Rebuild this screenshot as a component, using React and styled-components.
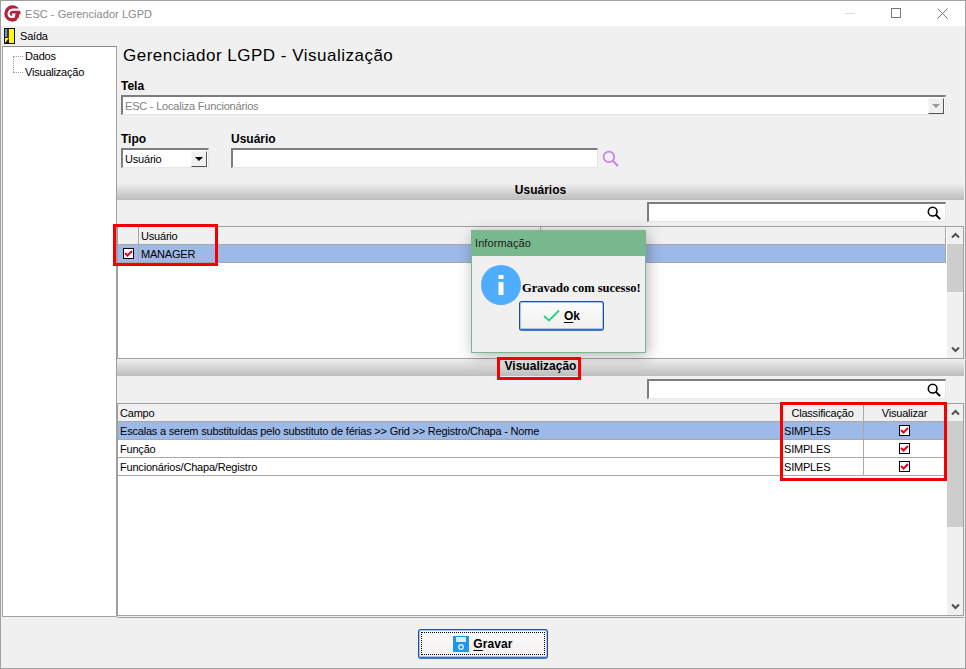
import React from 'react';
import styled, { createGlobalStyle } from 'styled-components';

const GlobalStyle = createGlobalStyle`
  html, body { margin: 0; padding: 0; background: #f0f0f0; }
  body { font-family: "Liberation Sans", Arial, sans-serif; font-size: 11px; color: #000; }
  * { box-sizing: border-box; }
`;

const camposRows = [
  { campo: 'Escalas a serem substituídas pelo substituto de férias >> Grid >> Registro/Chapa - Nome', selected: true },
  { campo: 'Função' },
  { campo: 'Funcionários/Chapa/Registro' },
];

const Window = styled.div`
  position: relative;
  width: 966px;
  height: 669px;
  background: #f0f0f0;
  border: 1px solid #a0a0a0;
  display: flex;
  flex-direction: column;
  overflow: hidden;
`;

const TitleBar = styled.div`
  height: 25px;
  background: #fff;
  display: flex;
  align-items: center;
  padding-left: 3px;
  flex: none;
`;

const TitleText = styled.span`
  margin-left: 4px;
  font-size: 11px;
  color: #8a8a8a;
  letter-spacing: 0.05px;
`;

const WindowButtons = styled.div`
  margin-left: auto;
  display: flex;
  align-items: center;
  gap: 35px;
  padding-right: 17px;
`;

const MenuBar = styled.div`
  height: 20px;
  display: flex;
  align-items: center;
  padding-left: 3px;
  gap: 5px;
  font-size: 11px;
  letter-spacing: -0.2px;
  flex: none;
`;

const Body = styled.div`
  flex: none;
  height: 571px;
  display: flex;
  padding-left: 1px;
`;

const Sidebar = styled.div`
  width: 115px;
  flex: none;
  background: #fff;
  border: 1px solid #a0a0a0;
  border-top-color: #8c8c8c;
  padding: 1px 0 0 10px;
`;

const TreeItem = styled.div`
  position: relative;
  height: 16px;
  display: flex;
  align-items: center;
  font-size: 11px;
  letter-spacing: -0.2px;
  &::before {
    content: '';
    width: 10px;
    margin-right: 2px;
    border-top: 1px dotted #a0a0a0;
  }
  &:not(:last-child)::after {
    content: '';
    position: absolute;
    left: 0;
    top: 8px;
    height: 16px;
    border-left: 1px dotted #a0a0a0;
  }
`;

const Main = styled.div`
  flex: 1;
  min-width: 0;
  display: flex;
  flex-direction: column;
`;

const FormArea = styled.div`
  height: 137px;
  padding: 0 18px 0 4px;
  flex: none;
`;

const Heading = styled.h1`
  margin: 0;
  padding: 0 0 0 2px;
  height: 33px;
  font-size: 17px;
  line-height: 20px;
  font-weight: 400;
  letter-spacing: 0.5px;
`;

const FieldLabel = styled.div`
  font-size: 12px;
  font-weight: 700;
  height: 14px;
  line-height: 14px;
`;

const Sunken = styled.div`
  height: 20px;
  background: #fff;
  border-top: 2px solid #7d7d7d;
  border-left: 2px solid #7d7d7d;
  border-right: 1px solid #e6e6e6;
  border-bottom: 1px solid #e6e6e6;
  display: flex;
  align-items: center;
  padding-left: 2px;
  font-size: 11px;
  letter-spacing: -0.2px;
  width: ${(p) => p.$width || 'auto'};
  flex: none;
`;

const TelaCombo = styled(Sunken)`
  margin-top: 2px;
`;

const ComboValue = styled.span`
  flex: 1;
  white-space: nowrap;
  color: ${(p) => (p.$disabled ? '#808080' : '#000')};
`;

const ComboArrow = styled.div`
  width: 16px;
  height: 16px;
  margin-right: 1px;
  background: #f0f0f0;
  border: 1px solid;
  border-color: #f8f8f8 #555 #555 #f8f8f8;
  display: flex;
  align-items: center;
  justify-content: center;
  &::after {
    content: '';
    border-left: 4px solid transparent;
    border-right: 4px solid transparent;
    border-top: 4px solid ${(p) => (p.$disabled ? '#999' : '#000')};
  }
`;

const FieldRow = styled.div`
  display: flex;
  align-items: flex-end;
  gap: 22px;
  margin-top: 17px;
`;

const Field = styled.div`
  display: flex;
  flex-direction: column;
  gap: 2px;
`;

const UserInput = styled.div`
  display: flex;
  align-items: center;
  gap: 4px;
`;

const SectionBar = styled.div`
  height: 17px;
  flex: none;
  margin-right: 1px;
  background: linear-gradient(#f0f0f0, #bcbcbc);
  text-align: center;
  font-size: 12px;
  font-weight: 700;
  line-height: 15px;
`;

const FilterRow = styled.div`
  height: ${(p) => p.$height}px;
  flex: none;
  display: flex;
  justify-content: flex-end;
  padding: ${(p) => p.$top}px 19px 0 0;
`;

const FilterBox = styled(Sunken)`
  width: 299px;
  justify-content: flex-end;
  padding-right: 4px;
`;

const GridBox = styled.div`
  flex: none;
  height: ${(p) => p.$height}px;
  margin-right: 1px;
  border: 1px solid #a0a0a0;
  background: #fff;
  display: flex;
`;

const GridBody = styled.div`
  flex: 1;
  min-width: 0;
  border-right: 1px solid #fff;
`;

const Row = styled.div`
  display: grid;
  grid-template-columns: ${(p) => p.$cols};
  height: 18px;
  background: ${(p) => (p.$header ? '#f0f0f0' : p.$selected ? '#9db9e8' : '#fff')};
  border-bottom: 1px solid #a8a8a8;
  border-right: 1px solid #a8a8a8;
`;

const Cell = styled.div`
  display: flex;
  align-items: center;
  justify-content: ${(p) => (p.$center ? 'center' : 'flex-start')};
  padding-left: ${(p) => (p.$center ? 0 : 2)}px;
  font-size: 11px;
  letter-spacing: -0.2px;
  white-space: nowrap;
  overflow: hidden;
  border-right: ${(p) => (p.$sep ? '1px solid #a8a8a8' : 'none')};
`;

const CheckBox = styled.span`
  width: 11px;
  height: 11px;
  background: #fff;
  border: 1px solid #000;
  display: inline-flex;
  align-items: center;
  justify-content: center;
`;

const ScrollBar = styled.div`
  width: 16px;
  flex: none;
  background: #f0f0f0;
  display: flex;
  flex-direction: column;
`;

const ScrollButton = styled.div`
  height: 17px;
  flex: none;
  display: flex;
  align-items: center;
  justify-content: center;
  background: #f0f0f0;
`;

const ScrollTrack = styled.div`
  flex: 1;
`;

const ScrollThumb = styled.div`
  height: ${(p) => p.$height}px;
  background: #cdcdcd;
`;

const Footer = styled.div`
  flex: 1;
  border-top: 1px solid #a0a0a0;
  margin-left: 116px;
  margin-right: 1px;
  display: flex;
  align-items: flex-start;
  padding: 11px 0 0 301px;
`;

const WinButton = styled.button`
  width: ${(p) => p.$width}px;
  height: ${(p) => p.$height}px;
  border: 1px solid #1f4f94;
  border-bottom: 2px solid #3f6fc8;
  border-radius: 3px;
  background: linear-gradient(#fdfdfd, #f2efec);
  padding: 0;
  display: flex;
  align-items: center;
  justify-content: center;
  gap: 4px;
  font-family: "Liberation Sans", Arial, sans-serif;
  font-size: 12px;
  font-weight: 700;
  letter-spacing: 0.1px;
  color: #000;
  box-shadow: inset 0 0 0 1px #a9c4f0;
  position: relative;
  ${(p) =>
    p.$focused &&
    `&::after {
      content: '';
      position: absolute;
      inset: 2px;
      border: 1px dotted #000;
    }`}
  u { text-underline-offset: 2px; }
`;

const Dialog = styled.div`
  position: absolute;
  left: 470px;
  top: 229px;
  width: 175px;
  height: 123px;
  background: #f0f0f0;
  border: 1px solid #78b88f;
  box-shadow: 2px 3px 14px rgba(0, 0, 0, 0.3);
  display: flex;
  flex-direction: column;
`;

const DialogTitle = styled.div`
  height: 25px;
  flex: none;
  background: #78b88f;
  font-size: 11px;
  letter-spacing: 0.1px;
  line-height: 25px;
  padding-left: 3px;
  color: #1a1a1a;
`;

const DialogBody = styled.div`
  padding: 9px 0 0 9px;
  display: flex;
  align-items: center;
  gap: 1px;
`;

const InfoIcon = styled.div`
  width: 40px;
  height: 40px;
  border-radius: 50%;
  background: #4fadff;
  flex: none;
  display: flex;
  align-items: center;
  justify-content: center;
`;

const DialogMessage = styled.span`
  font-family: "Liberation Serif", "Times New Roman", serif;
  font-size: 12.5px;
  font-weight: 700;
  white-space: nowrap;
  padding-top: 6px;
`;

const DialogActions = styled.div`
  display: flex;
  justify-content: flex-start;
  margin-top: -4px;
  padding-left: 47px;
`;

// Red annotation rectangles drawn on top of the screenshot
const Highlight = styled.div`
  position: absolute;
  left: ${(p) => p.$x}px;
  top: ${(p) => p.$y}px;
  width: ${(p) => p.$w}px;
  height: ${(p) => p.$h}px;
  border: 3px solid #f50000;
  pointer-events: none;
`;

const Logo = () => (
  <svg width="17" height="17" viewBox="0 0 17 17">
    <circle cx="8.5" cy="8.5" r="8.2" fill="#b3213a" />
    <path d="M17 4.6 H9 Q5.2 4.8 4.6 8.6 Q4.6 12 8 12 H10.4 L11 9.6 H8" fill="none" stroke="#fff" strokeWidth="2.2" />
    <path d="M11.5 9 H17 V17 H14 Z" fill="#fff" />
    <path d="M11.6 8.4 H15.6 L14.4 13.4 H10.4 Z" fill="#b3213a" />
  </svg>
);

const ExitIcon = () => (
  <svg width="11" height="16" viewBox="0 0 11 16">
    <rect width="11" height="16" fill="#111" />
    <rect x="5" y="1" width="5" height="14" fill="#ffff00" />
    <rect x="1" y="1" width="2" height="8" fill="#22b8d8" />
    <rect x="3" y="1" width="2" height="9" fill="#8a1414" />
    <rect x="1" y="10" width="4" height="5" fill="#ffff00" />
    <path d="M1 15 L5 10 V15 Z" fill="#111" />
  </svg>
);

const Tick = () => (
  <svg width="9" height="9" viewBox="0 0 9 9">
    <path d="M1 4 L3.5 6.5 L8 2" fill="none" stroke="#e8001c" strokeWidth="2" />
  </svg>
);

const Magnifier = ({ size = 16, color = '#000', stroke = 1.8 }) => (
  <svg width={size} height={size} viewBox="0 0 16 16">
    <circle cx="6.5" cy="6.5" r="5" fill="none" stroke={color} strokeWidth={stroke} />
    <path d="M10 10 L15 15" stroke={color} strokeWidth={stroke + 0.3} />
  </svg>
);

const Chevron = ({ down }) => (
  <svg width="9" height="7" viewBox="0 0 9 7">
    <path d={down ? 'M1 1.5 L4.5 5 L8 1.5' : 'M1 5.5 L4.5 2 L8 5.5'} fill="none" stroke="#505050" strokeWidth="2" />
  </svg>
);

const FloppyIcon = () => (
  <svg width="16" height="16" viewBox="0 0 16 16">
    <rect width="16" height="16" fill="#1e96f0" />
    <rect x="3" y="1" width="10" height="5" fill="#d8ecfb" />
    <circle cx="8" cy="11" r="2.3" fill="none" stroke="#d8ecfb" strokeWidth="1.4" />
  </svg>
);

const Scroll = ({ thumb }) => (
  <ScrollBar>
    <ScrollButton><Chevron /></ScrollButton>
    <ScrollThumb $height={thumb} />
    <ScrollTrack />
    <ScrollButton><Chevron down /></ScrollButton>
  </ScrollBar>
);

const USER_COLS = '21px 402px 1fr';
const FIELD_COLS = '1fr 82px 81px';

export default function App() {
  return (
    <>
      <GlobalStyle />
      <Window>
        <TitleBar>
          <Logo />
          <TitleText>ESC - Gerenciador LGPD</TitleText>
          <WindowButtons>
            <svg width="11" height="11" viewBox="0 0 11 11"><path d="M0 5.5 H10" stroke="#dcdcdc" /></svg>
            <svg width="11" height="11" viewBox="0 0 11 11"><rect x="0.5" y="0.5" width="9" height="9" fill="none" stroke="#777" /></svg>
            <svg width="11" height="11" viewBox="0 0 11 11"><path d="M0.5 0.5 L10.5 10.5 M10.5 0.5 L0.5 10.5" stroke="#777" /></svg>
          </WindowButtons>
        </TitleBar>
        <MenuBar>
          <ExitIcon />
          <span>Saída</span>
        </MenuBar>
        <Body>
          <Sidebar>
            <TreeItem>Dados</TreeItem>
            <TreeItem>Visualização</TreeItem>
          </Sidebar>
          <Main>
            <FormArea>
              <Heading>Gerenciador LGPD - Visualização</Heading>
              <FieldLabel>Tela</FieldLabel>
              <TelaCombo $width="825px">
                <ComboValue $disabled>ESC - Localiza Funcionários</ComboValue>
                <ComboArrow $disabled />
              </TelaCombo>
              <FieldRow>
                <Field>
                  <FieldLabel>Tipo</FieldLabel>
                  <Sunken $width="88px">
                    <ComboValue>Usuário</ComboValue>
                    <ComboArrow />
                  </Sunken>
                </Field>
                <Field>
                  <FieldLabel>Usuário</FieldLabel>
                  <UserInput>
                    <Sunken $width="367px" />
                    <Magnifier size={17} color="#c583ea" stroke={1.6} />
                  </UserInput>
                </Field>
              </FieldRow>
            </FormArea>

            <SectionBar>Usuários</SectionBar>
            <FilterRow $height={26} $top={2}>
              <FilterBox><Magnifier size={14} /></FilterBox>
            </FilterRow>
            <GridBox $height={133}>
              <GridBody>
                <Row $header $cols={USER_COLS}>
                  <Cell $sep />
                  <Cell $sep>Usuário</Cell>
                  <Cell />
                </Row>
                <Row $selected $cols={USER_COLS}>
                  <Cell $center $sep><CheckBox><Tick /></CheckBox></Cell>
                  <Cell>MANAGER</Cell>
                  <Cell />
                </Row>
              </GridBody>
              <Scroll thumb={48} />
            </GridBox>

            <SectionBar>Visualização</SectionBar>
            <FilterRow $height={27} $top={3}>
              <FilterBox><Magnifier size={14} /></FilterBox>
            </FilterRow>
            <GridBox $height={213}>
              <GridBody>
                <Row $header $cols={FIELD_COLS}>
                  <Cell $sep>Campo</Cell>
                  <Cell $center $sep>Classificação</Cell>
                  <Cell $center>Visualizar</Cell>
                </Row>
                {camposRows.map((row) => (
                  <Row key={row.campo} $selected={row.selected} $cols={FIELD_COLS}>
                    <Cell $sep>{row.campo}</Cell>
                    <Cell $sep>SIMPLES</Cell>
                    <Cell $center><CheckBox><Tick /></CheckBox></Cell>
                  </Row>
                ))}
              </GridBody>
              <Scroll thumb={106} />
            </GridBox>
          </Main>
        </Body>
        <Footer>
          <WinButton $width={130} $height={30} $focused>
            <FloppyIcon />
            <span><u>G</u>ravar</span>
          </WinButton>
        </Footer>

        <Dialog>
          <DialogTitle>Informação</DialogTitle>
          <DialogBody>
            <InfoIcon>
              <svg width="6" height="20" viewBox="0 0 6 20">
                <rect x="0.5" width="5" height="4" fill="#fff" />
                <rect x="0.5" y="7" width="5" height="13" fill="#fff" />
              </svg>
            </InfoIcon>
            <DialogMessage>Gravado com sucesso!</DialogMessage>
          </DialogBody>
          <DialogActions>
            <WinButton $width={85} $height={30}>
              <svg width="17" height="13" viewBox="0 0 17 13">
                <path d="M1 7 L6 11.5 L16 1.5" fill="none" stroke="#1fd38a" strokeWidth="1.8" />
              </svg>
              <span><u>O</u>k</span>
            </WinButton>
          </DialogActions>
        </Dialog>

        <Highlight $x={112} $y={223} $w={105} $h={42} />
        <Highlight $x={496} $y={356} $w={84} $h={23} />
        <Highlight $x={779} $y={401} $w={167} $h={79} />
      </Window>
    </>
  );
}
